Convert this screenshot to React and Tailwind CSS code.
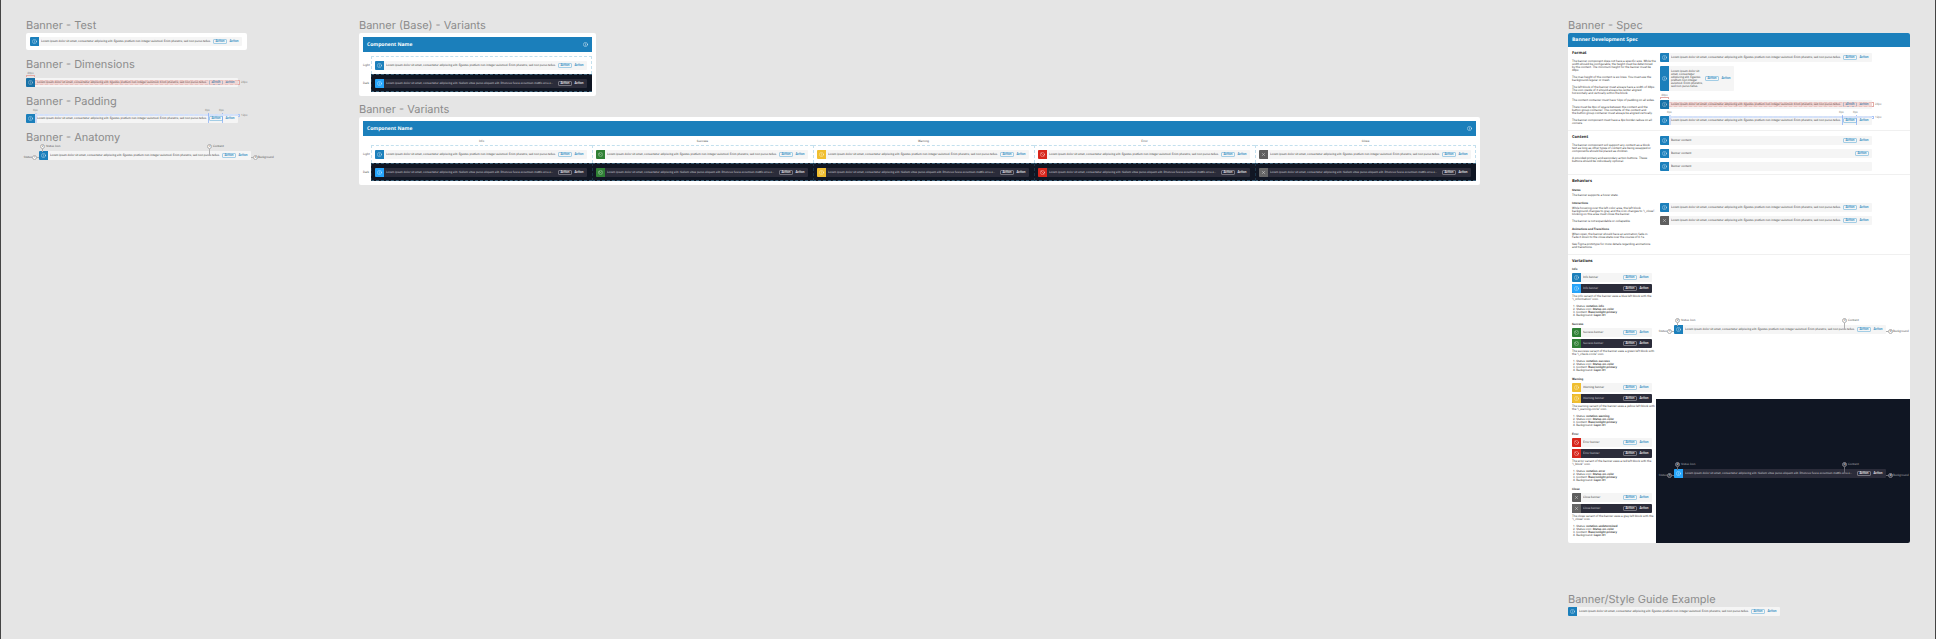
import React from "react";
import { Info, BadgeCheck, CircleAlert, Ban, X } from "lucide-react";

const LIGHT_TEXT =
  "Lorem ipsum dolor sit amet, consectetur adipiscing elit. Egestas pretium non integer euismod. Enim pharetra, sed non purus tellus.";
const DARK_TEXT =
  "Lorem ipsum dolor sit amet, consectetur adipiscing elit. Nullam vitae purus aliquam elit. Rhoncus fusce accumsan mattis arcu a...";

const KINDS = {
  info: { label: "Info", icon: Info, light: "bg-[#1b7fbb]", dark: "bg-[#26a5fb]" },
  success: { label: "Success", icon: BadgeCheck, light: "bg-[#2f8035]", dark: "bg-[#2f8035]" },
  warning: { label: "Warning", icon: CircleAlert, light: "bg-[#f0be2f]", dark: "bg-[#f0be2f]" },
  error: { label: "Error", icon: Ban, light: "bg-[#d8261c]", dark: "bg-[#d8261c]" },
  close: { label: "Close", icon: X, light: "bg-[#5e5e5e]", dark: "bg-[#666666]" },
};

function Banner({ kind = "info", dark = false, text, actions = 2, width = "w-[212px]", className = "", wrap = false, children }) {
  const k = KINDS[kind];
  const Icon = k.icon;
  return (
    <div
      className={`relative flex shrink-0 items-stretch rounded-[1px] ${width} ${wrap ? "" : "h-[9px]"} ${
        dark ? "bg-[#2b2c3a] text-[#c9c9cf]" : "bg-[#f5f5f5] text-[#444444]"
      } ${className}`}
    >
      <span className={`flex w-[9px] shrink-0 items-center justify-center rounded-l-[1px] text-white/80 ${dark ? k.dark : k.light}`}>
        <Icon size={5} strokeWidth={2} />
      </span>
      <p className={`ml-[2px] min-w-0 self-center font-['Lato',sans-serif] ${wrap ? "w-[32px] leading-[3px]" : "flex-1 overflow-hidden whitespace-nowrap leading-[5px]"}`}>
        {text ?? (dark ? DARK_TEXT : LIGHT_TEXT)}
      </p>
      <div className="ml-auto flex items-center gap-[2px] pr-[3px] font-['Lato',sans-serif] font-bold leading-[3px]">
        {actions > 0 && (
          <button
            className={`flex h-[5px] w-[14px] items-center justify-center rounded-[1px] border ${
              dark ? "border-[#75757f] text-[#e4e4e8]" : "border-[#a3cde5] text-[#2f8cc2]"
            }`}
          >
            Action
          </button>
        )}
        {actions > 1 && (
          <button className={`flex h-[5px] w-[10px] items-center justify-center ${dark ? "text-[#e4e4e8]" : "text-[#2f8cc2]"}`}>Action</button>
        )}
      </div>
      {children}
    </div>
  );
}

function DimensionBanner() {
  return (
    <Banner>
      <span className="absolute left-0 top-[-6px] w-[9px] text-center leading-[3px] text-[#888]">48px</span>
      <span className="absolute left-0 top-[-3px] h-[2px] w-[9px] border-x border-t border-[#e3aaa6]" />
      <span className="absolute inset-y-0 left-0 w-[9px] bg-black/10" />
      <span className="absolute left-[9px] right-0 top-[2px] h-[5px] border-y border-dashed border-[#e9c3c0] bg-[#e05a50]/20" />
      <span className="absolute right-[-2px] top-[2px] h-[5px] w-[2px] border-y border-r border-[#e3aaa6]" />
      <span className="absolute left-full top-[3px] ml-[3px] leading-[3px] text-[#888]">24px</span>
    </Banner>
  );
}

function PaddingBanner() {
  return (
    <Banner>
      <span className="absolute left-[7px] top-[-5px] leading-[3px] text-[#888]">8px</span>
      <span className="absolute left-[179px] top-[-5px] leading-[3px] text-[#888]">8px</span>
      <span className="absolute left-[193px] top-[-5px] leading-[3px] text-[#888]">8px</span>
      <span className="absolute left-[9px] top-[-1px] h-[10px] w-[2px] bg-[#6d9cf5]/30" />
      <span className="absolute left-[182px] top-[-1px] h-[10px] w-px bg-[#6d9cf5]/60" />
      <span className="absolute left-[196px] top-[-1px] h-[10px] w-px bg-[#6d9cf5]/60" />
      <span className="absolute left-[9px] right-0 top-0 h-[2px] border-y border-dashed border-[#d3e1fb] bg-[#6d9cf5]/20" />
      <span className="absolute right-[-2px] top-0 h-[3px] w-[2px] border-y border-r border-[#a9c4f7]" />
      <span className="absolute left-full top-0 ml-[3px] leading-[3px] text-[#888]">12px</span>
    </Banner>
  );
}

function Marker({ n, dark, className }) {
  return (
    <span
      className={`absolute flex size-[5px] items-center justify-center rounded-full border leading-[3px] ${
        dark ? "border-[#7c7c84] bg-[#3a3b45] text-white" : "border-[#b0b0b0] bg-white text-[#555]"
      } ${className}`}
    >
      {n}
    </span>
  );
}

function AnatomyBanner({ dark = false }) {
  const line = dark ? "bg-[#66676f]" : "bg-[#b0b0b0]";
  const label = `absolute leading-[3px] whitespace-nowrap font-['Lato',sans-serif] ${dark ? "text-[#a5a5ac]" : "text-[#555]"}`;
  return (
    <Banner dark={dark}>
      <span className={`absolute left-[3px] top-[-2px] h-[3px] w-px ${line}`} />
      <Marker n="2" dark={dark} className="left-[1px] top-[-7px]" />
      <span className={`${label} left-[7px] top-[-6px]`}>Status Icon</span>
      <span className={`absolute left-[170px] top-[-2px] h-[6px] w-px ${line}`} />
      <Marker n="3" dark={dark} className="left-[168px] top-[-7px]" />
      <span className={`${label} left-[174px] top-[-6px]`}>Content</span>
      <span className={`absolute left-[-3px] top-[6px] h-px w-[3px] ${line}`} />
      <Marker n="1" dark={dark} className="left-[-7px] top-[4px]" />
      <span className={`${label} right-full top-[5px] mr-[7px]`}>Status</span>
      <span className={`absolute left-full top-[6px] h-px w-[3px] ${line}`} />
      <Marker n="4" dark={dark} className="left-[214px] top-[4px]" />
      <span className={`${label} left-[219px] top-[5px]`}>Background</span>
    </Banner>
  );
}

function Title({ children }) {
  return <h2 className="whitespace-nowrap font-['Inter',sans-serif] text-[11px] leading-[12px] text-[#8c8c8c]">{children}</h2>;
}

function Bar({ children }) {
  return (
    <header className="flex h-[15px] items-center justify-between bg-[#1b7fbb] px-1 font-['Open_Sans',sans-serif] text-[5px] font-bold leading-[6px] text-white">
      <h3>{children}</h3>
      <Info size={5} strokeWidth={2} />
    </header>
  );
}

function VariantGrid({ kinds, headed }) {
  return (
    <div className="flex">
      <div className={`flex w-[8px] flex-col text-[3px] leading-[3px] text-[#555] ${headed ? "pt-[9px]" : "pt-[4px]"}`}>
        <span className="flex h-[18px] items-center">Light</span>
        <span className="flex h-[18px] items-center">Dark</span>
      </div>
      <div className="flex">
        {kinds.map((kind) => (
          <div key={kind} className="group flex w-[221px] flex-col">
            <div className={`text-center leading-[3px] text-[#555] ${headed ? "h-[9px] pt-[4px]" : "h-[4px]"}`}>
              {headed && KINDS[kind].label}
            </div>
            <div className="flex h-[18px] items-center border-l border-t border-dashed border-[#c3e0ee] pl-[3px] group-last:border-r">
              <Banner kind={kind} />
            </div>
            <div className="flex h-[18px] items-center border-y border-l border-dashed border-y-[#3a6079] border-l-[#1b3447] bg-[#101623] pl-[3px]">
              <Banner kind={kind} dark />
            </div>
          </div>
        ))}
      </div>
    </div>
  );
}

function Para({ lines, className = "mt-1" }) {
  return (
    <p className={`whitespace-nowrap leading-[3px] ${className}`}>
      {lines.map((l) => (
        <span key={l} className="block">
          {l}
        </span>
      ))}
    </p>
  );
}

function SpecHeading({ children }) {
  return <h3 className="font-['Open_Sans',sans-serif] text-[4px] font-bold leading-[5px] text-[#222]">{children}</h3>;
}

function SubHeading({ children, className = "mt-[5px]" }) {
  return <h4 className={`font-bold leading-[3px] text-[#333] ${className}`}>{children}</h4>;
}

const VARIATIONS = [
  ["info", ["The info variant of the banner uses a blue left block with the", "“i_information” icon."], "notation-info"],
  ["success", ["The success variant of the banner uses a green left block with", "the “i_check-circle” icon."], "notation-success"],
  ["warning", ["The warning variant of the banner uses a yellow left block with", "the “i_warning-circle” icon."], "notation-warning"],
  ["error", ["The error variant of the banner uses a red left block with the", "“i_block” icon."], "notation-error"],
  ["close", ["The close variant of the banner uses a gray left block with the", "“i_close” icon."], "notation-undetermined"],
];

function Variation({ kind, lines, token, first }) {
  const label = KINDS[kind].label;
  return (
    <section>
      <SubHeading className={first ? "mt-1" : "mt-[6px]"}>{label}</SubHeading>
      <Banner kind={kind} text={`${label} banner`} width="w-[80px]" className="mt-[2px]" />
      <Banner kind={kind} dark text={`${label} banner`} width="w-[80px]" className="mt-[2px]" />
      <Para lines={lines} className="mt-[2px]" />
      <ol className="mt-1 whitespace-nowrap pl-px leading-[3px]">
        <li>1. Status: <b>{token}</b></li>
        <li>2. Status icon: <b>Status-on-color</b></li>
        <li>3. Content: <b>Base/onlight-primary</b></li>
        <li>4. Background: <b>Layer-01</b></li>
      </ol>
    </section>
  );
}

function SpecRow({ left, right, className = "" }) {
  return (
    <section className={`flex border-b border-[#f0f0f0] ${className}`}>
      <div className="w-[88px] shrink-0 pl-1 pt-1">{left}</div>
      <div className="flex flex-1 flex-col pl-1">{right}</div>
    </section>
  );
}

function Spec() {
  return (
    <article className="mt-[2px] w-[342px] overflow-hidden rounded-[2px] bg-white">
      <header className="flex h-[14px] items-center bg-[#1b7fbb] px-1 font-['Open_Sans',sans-serif] text-[5px] font-bold leading-[6px] text-white">
        <h3>Banner Development Spec</h3>
      </header>
      <SpecRow
        className="h-[84px]"
        left={
          <>
            <SpecHeading>Format</SpecHeading>
            <Para lines={["The banner component does not have a specific size. While the", "width should be configurable, the height must be determined", "by the content. The minimum height for the banner must be", "48px."]} />
            <Para lines={["The max height of the content is six lines. You must use the", "background-regular or mesh."]} />
            <Para lines={["The left block of the banner must always have a width of 48px.", "The icon inside of it should always be center aligned", "horizontally and vertically within the block."]} />
            <Para lines={["The content container must have 12px of padding on all sides."]} />
            <Para lines={["There must be 8px of space between the content and the", "button group container. The contents of the content and", "the button group container must always be aligned vertically."]} />
            <Para lines={["The banner component must have a 4px border-radius on all", "corners."]} />
          </>
        }
        right={
          <>
            <Banner className="mt-[6px]" />
            <Banner wrap width="w-[74px]" className="mt-1 h-[25px]" />
            <div className="mt-[9px]">
              <DimensionBanner />
            </div>
            <div className="mt-[7px]">
              <PaddingBanner />
            </div>
          </>
        }
      />
      <SpecRow
        className="h-[44px]"
        left={
          <>
            <SpecHeading>Content</SpecHeading>
            <Para lines={["The banner component will support any content as a block", "text as long as other types of content are being swapped or", "components should be placed as children."]} />
            <Para lines={["A provided primary and secondary action buttons. These", "buttons should be individually optional."]} />
          </>
        }
        right={
          <>
            <Banner text="Banner content" className="mt-[5px]" />
            <Banner text="Banner content" actions={1} className="mt-1" />
            <Banner text="Banner content" actions={0} className="mt-1" />
          </>
        }
      />
      <SpecRow
        className="h-[80px]"
        left={
          <>
            <SpecHeading>Behaviors</SpecHeading>
            <SubHeading>States</SubHeading>
            <Para lines={["The banner supports a hover state."]} className="mt-[2px]" />
            <SubHeading>Interactions</SubHeading>
            <Para lines={["While hovering over the left color area, the left block", "background changes to gray and the icon changes to “i_close”.", "Clicking on this area must close the banner."]} className="mt-[2px]" />
            <Para lines={["The banner is not expandable or collapsible."]} />
            <SubHeading>Animations and Transitions</SubHeading>
            <Para lines={["When open, the banner should have an animation fade-in.", "Fade it down to the close state over the course of 0.1s."]} className="mt-[2px]" />
            <Para lines={["See Figma prototype for more details regarding animations", "and transitions."]} />
          </>
        }
        right={
          <>
            <Banner className="mt-[28px]" />
            <Banner kind="close" className="mt-1" />
          </>
        }
      />
      <section className="flex">
        <div className="w-[88px] shrink-0 pb-[6px] pl-1 pt-1">
          <SpecHeading>Variations</SpecHeading>
          {VARIATIONS.map(([kind, lines, token], i) => (
            <Variation key={kind} kind={kind} lines={lines} token={token} first={i === 0} />
          ))}
        </div>
        <div className="flex flex-1 flex-col">
          <div className="flex flex-1 items-center pl-[18px] pt-[5px]">
            <AnatomyBanner />
          </div>
          <div className="flex flex-1 items-center bg-[#101623] pl-[18px] pt-[5px]">
            <AnatomyBanner dark />
          </div>
        </div>
      </section>
    </article>
  );
}

export default function App() {
  return (
    <main className="flex min-h-screen items-start border-x border-[#444444] bg-[#e5e5e5] pl-[25px] pr-[25px] pt-[19px] font-['Roboto',sans-serif] text-[3px] text-[#444444] [text-rendering:geometricPrecision]">
      <div className="w-[333px] shrink-0">
        <Title>Banner - Test</Title>
        <div className="mt-[2px] flex w-[221px] rounded-[2px] bg-white px-1 py-[4px]">
          <Banner />
        </div>
        <div className="mt-[8px]">
          <Title>Banner - Dimensions</Title>
          <div className="mt-2">
            <DimensionBanner />
          </div>
        </div>
        <div className="mt-2">
          <Title>Banner - Padding</Title>
          <div className="mt-[7px]">
            <PaddingBanner />
          </div>
        </div>
        <div className="mt-2">
          <Title>Banner - Anatomy</Title>
          <div className="mt-2 pl-[13px]">
            <AnatomyBanner />
          </div>
        </div>
      </div>

      <div className="shrink-0">
        <Title>Banner (Base) - Variants</Title>
        <div className="mt-[2px] w-[237px] rounded-[2px] bg-white p-1">
          <Bar>Component Name</Bar>
          <VariantGrid kinds={["info"]} />
        </div>
        <div className="mt-[7px]">
          <Title>Banner - Variants</Title>
          <div className="mt-[2px] w-[1121px] rounded-[2px] bg-white p-1">
            <Bar>Component Name</Bar>
            <VariantGrid headed kinds={["info", "success", "warning", "error", "close"]} />
          </div>
        </div>
      </div>

      <div className="ml-auto shrink-0">
        <Title>Banner - Spec</Title>
        <Spec />
        <div className="mt-[50px]">
          <Title>Banner/Style Guide Example</Title>
          <Banner className="mt-[2px]" />
        </div>
      </div>
    </main>
  );
}
